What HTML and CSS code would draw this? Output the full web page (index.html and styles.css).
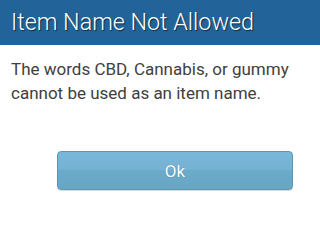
FILE: index.html
```html
<!DOCTYPE html>
<html>
<head>
<meta charset="utf-8">
<link rel="stylesheet" href="styles.css">
</head>
<body>
<div class="dialog">
  <div class="header"><h1 class="title">Item Name Not Allowed</h1></div>
  <p class="message">The words CBD, Cannabis, or gummy cannot be used as an item name.</p>
  <div class="actions"><button class="btn">Ok</button></div>
</div>
</body>
</html>
```
FILE: styles.css
```css
html, body { margin: 0; padding: 0; background: #fff; }
body { width: 320px; height: 226px; overflow: hidden; font-family: Roboto, "Liberation Sans", sans-serif; }
.dialog { display: flex; flex-direction: column; }
.header { background: #22649a; height: 45px; display: flex; align-items: center; padding: 0 11px; box-sizing: border-box; }
.title { margin: 0; font-weight: 300; font-size: 23.3px; color: #fff; text-shadow: 1px 1px 1px rgba(0,0,0,0.6); line-height: 1; white-space: nowrap; }
.message { margin: 12px 11px 0; font-size: 17px; line-height: 24px; color: #404040; }
.actions { padding: 0 27px 0 57px; margin-top: 46px; }
.btn { width: 236px; height: 39px; border: 1px solid #5d95b5; border-radius: 4px; background: linear-gradient(#7bb7d8 0%, #74b1d3 50%, #6caac9 50%, #68a6c6 100%); color: #fff; font-family: Roboto, "Liberation Sans", sans-serif; font-size: 17px; text-shadow: 0 0 1px rgba(0,0,0,0.4); box-shadow: 0 1px 1px rgba(0,0,0,0.15); padding: 0; }
```
